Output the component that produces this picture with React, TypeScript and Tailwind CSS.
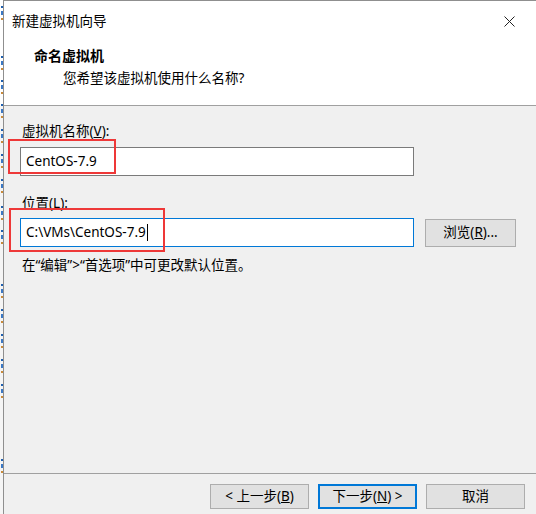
import React from "react";

const font = { fontFamily: '"Noto Sans", "Noto Sans CJK SC", sans-serif' };

// slivers of the window behind the dialog (clipped glyph edges)
const behind = [12, 62, 86, 110, 135, 160, 185, 212, 236, 290, 315, 340, 365, 390, 465];

const Button = ({ children, primary }: { children: React.ReactNode; primary?: boolean }) => (
  <div
    className={`w-[99px] h-[25px] flex items-center justify-center bg-[#e1e1e1] border text-[13.5px] text-black ${
      primary ? "border-[#0078d7] border-2" : "border-[#adadad]"
    }`}
  >
    {children}
  </div>
);

export default function App() {
  return (
    <div className="relative w-[536px] h-[514px] flex overflow-hidden bg-[#f0f0f0]" style={font}>
      {/* left strip of background app */}
      <div className="relative w-[3px] h-full overflow-hidden bg-[#f5f5f5]">
        <div className="h-[106px] bg-white" />
        {behind.map((y) => (
          <div key={y} className="absolute right-0 w-[2px] flex flex-col gap-[3px]" style={{ top: y - 6 }}>
            <div className="h-[2px] bg-[#1f5fae]" />
            <div className="h-[4px] bg-[#3b78c4]" />
            <div className="h-[2px] bg-[#c98a3a]" />
          </div>
        ))}
      </div>

      {/* dialog window */}
      <div className="flex-1 flex flex-col border-l border-t border-[#8f8f8f]">
        <div className="h-[105px] bg-white border-b border-[#a0a0a0] shrink-0">
          <div className="h-[40px] flex items-center justify-between pl-[8px] pr-[21px]">
            <span className="text-[13.5px] text-black">新建虚拟机向导</span>
            <svg width="11" height="11" viewBox="0 0 11 11">
              <path d="M0.5 0.5L10.5 10.5M10.5 0.5L0.5 10.5" stroke="#222" strokeWidth="1" />
            </svg>
          </div>
          <div className="mt-[5px] pl-[30px] h-[20px] leading-[20px] text-[14px] font-bold text-black">
            命名虚拟机
          </div>
          <div className="mt-[2px] pl-[59px] h-[20px] leading-[20px] text-[13.5px] text-black">
            您希望该虚拟机使用什么名称?
          </div>
        </div>

        <div className="flex-1 flex flex-col pl-[16px] pt-[15px]">
          <div className="ml-[2px] h-[20px] leading-[20px] text-[13.5px] text-black">
            虚拟机名称(<span className="underline">V</span>):
          </div>
          <div className="mt-[6px] w-[394px] h-[29px] bg-white border border-[#7a7a7a] flex items-center pl-[5px] text-[13.5px] text-black">
            CentOS-7.9
          </div>

          <div className="mt-[17px] ml-[2px] h-[20px] leading-[20px] text-[13.5px] text-black">
            位置(<span className="underline">L</span>):
          </div>
          <div className="mt-[5px] flex items-center gap-[11px]">
            <div className="w-[394px] h-[29px] bg-white border border-[#0078d7] flex items-center pl-[5px] text-[13.5px] text-black">
              C:\VMs\CentOS-7.9
              <span className="ml-[1px] w-px h-[17px] bg-black" />
            </div>
            <div className="w-[91px] h-[28px] flex items-center justify-center bg-[#e1e1e1] border border-[#adadad] text-[13.5px] text-black">
              浏览(<span className="underline">R</span>)...
            </div>
          </div>
          <div className="mt-[8px] ml-[2px] h-[20px] leading-[20px] text-[13.5px] text-black">
            在“编辑”&gt;“首选项”中可更改默认位置。
          </div>
        </div>

        <div className="h-[41px] shrink-0 border-t border-[#a0a0a0] flex justify-end pr-[11px] pt-[10px] gap-[9px]">
          <Button>
            &lt; 上一步(<span className="underline">B</span>)
          </Button>
          <Button primary>
            下一步(<span className="underline">N</span>) &gt;
          </Button>
          <Button>取消</Button>
        </div>
      </div>

      {/* red annotation boxes */}
      <div className="absolute left-[8px] top-[139px] w-[108px] h-[35px] border-2 border-[#ee3838]" />
      <div className="absolute left-[9px] top-[208px] w-[156px] h-[44px] border-2 border-[#ee3838]" />
    </div>
  );
}
